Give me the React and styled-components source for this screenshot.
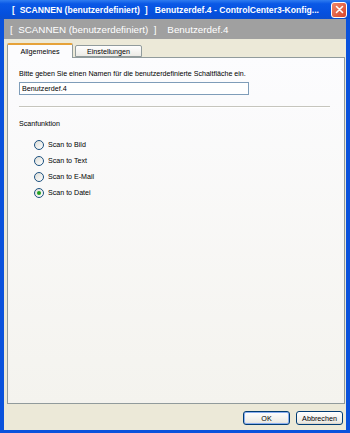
import React, { useState } from 'react';
import styled, { createGlobalStyle } from 'styled-components';

const GlobalStyle = createGlobalStyle`
  html, body {
    margin: 0;
    padding: 0;
    background: #0a50d8;
  }
  body {
    font-family: "Liberation Sans", Arial, sans-serif;
  }
`;

const Window = styled.div`
  width: 350px;
  height: 433px;
  display: flex;
  flex-direction: column;
  background: #0a52dc;
  box-sizing: border-box;
  padding: 0 4px 3px 4px;
  overflow: hidden;
`;

const TitleBar = styled.div`
  height: 19px;
  margin: 0 -4px;
  padding: 0 3px 0 12px;
  display: flex;
  align-items: center;
  justify-content: space-between;
  background: linear-gradient(#2f7cf0 0%, #0a58e6 20%, #0550de 70%, #0a4ed0 100%);
  color: #fff;
  font-family: "Liberation Sans", Arial, sans-serif;
  font-weight: bold;
  font-size: 8.6px;
  white-space: pre;
`;

const CloseButton = styled.div`
  width: 14px;
  height: 14px;
  border: 1px solid #fff;
  border-radius: 3px;
  background: linear-gradient(135deg, #f0866a, #d8452a);
  display: flex;
  align-items: center;
  justify-content: center;
`;

const Body = styled.div`
  flex: 1;
  display: flex;
  flex-direction: column;
  background: #ece9d8;
`;

const Header = styled.div`
  height: 20px;
  padding-left: 6px;
  display: flex;
  align-items: center;
  background: #a0a0a0;
  color: #fff;
  font-family: "Liberation Sans", Arial, sans-serif;
  font-size: 9.8px;
  white-space: pre;
`;

const TabRow = styled.div`
  display: flex;
  align-items: flex-end;
  padding: 3px 0 0 3px;
  height: 15px;
  position: relative;
  z-index: 1;
`;

const Tab = styled.div`
  box-sizing: border-box;
  height: ${(p) => (p.active ? '15px' : '12px')};
  width: ${(p) => p.width}px;
  margin-right: 2px;
  margin-bottom: ${(p) => (p.active ? '-1px' : '0')};
  border: 1px solid #919b9c;
  border-bottom: ${(p) => (p.active ? 'none' : '1px solid #919b9c')};
  border-top: ${(p) => (p.active ? '2px solid #e6a23a' : '1px solid #919b9c')};
  border-radius: 2px 2px 0 0;
  background: ${(p) => (p.active ? '#fcfcfe' : 'linear-gradient(#fefefe, #ecebe6)')};
  font-family: "Liberation Sans", Arial, sans-serif;
  font-size: 7.2px;
  color: #000;
  display: flex;
  justify-content: center;
  align-items: center;
`;

const Panel = styled.div`
  flex: 1;
  margin: 0 1px 0 3px;
  border: 1px solid #919b9c;
  background: linear-gradient(#fcfcfe, #f4f3ee);
  padding: 11px 0 0 11px;
  display: flex;
  flex-direction: column;
  font-family: "Liberation Sans", Arial, sans-serif;
  font-size: 7.1px;
  color: #000;
`;

const Label = styled.div`
  line-height: 10px;
  margin-bottom: ${(p) => p.gap || 0}px;
`;

const TextInput = styled.input`
  box-sizing: border-box;
  width: 230px;
  height: 13px;
  border: 1px solid #7f9db9;
  background: #fff;
  font-family: "Liberation Sans", Arial, sans-serif;
  font-size: 7.2px;
  padding: 0 2px;
  outline: none;
`;

const Separator = styled.div`
  height: 0;
  width: 311px;
  border-top: 1px solid #c6c5bd;
  border-bottom: 1px solid #fff;
  margin: 11px 0 11px;
`;

const RadioList = styled.div`
  display: flex;
  flex-direction: column;
  gap: 6px;
  padding: 11px 0 0 15px;
`;

const RadioRow = styled.label`
  display: flex;
  align-items: center;
  gap: 4px;
  height: 10px;
  cursor: default;
`;

const RadioCircle = styled.span`
  box-sizing: border-box;
  width: 10px;
  height: 10px;
  border-radius: 50%;
  border: 1px solid #1c5180;
  background: linear-gradient(135deg, #dcdcd6, #fff);
  display: flex;
  align-items: center;
  justify-content: center;
  &::after {
    content: '';
    width: 4px;
    height: 4px;
    border-radius: 50%;
    background: ${(p) => (p.checked ? '#21a121' : 'transparent')};
  }
`;

const Footer = styled.div`
  height: 26px;
  display: flex;
  justify-content: flex-end;
  align-items: flex-start;
  gap: 6px;
  padding: 7px 3px 0 0;
  box-sizing: border-box;
`;

const Button = styled.button`
  box-sizing: border-box;
  width: ${(p) => p.width}px;
  height: 14px;
  padding: 0;
  border: 1px solid #003c74;
  border-radius: 3px;
  background: linear-gradient(#fff, #ecebe6 85%, #d6d0c5);
  box-shadow: ${(p) => (p.default ? 'inset 0 0 0 1px #8aaef0' : 'none')};
  font-family: "Liberation Sans", Arial, sans-serif;
  font-size: 7.2px;
  color: #000;
`;

const options = ['Scan to Bild', 'Scan to Text', 'Scan to E-Mail', 'Scan to Datei'];

export default function App() {
  const [selected, setSelected] = useState(3);
  const [name, setName] = useState('Benutzerdef.4');

  return (
    <>
      <GlobalStyle />
      <Window>
        <TitleBar>
          <span>{'[  SCANNEN (benutzerdefiniert)  ]   Benutzerdef.4 - ControlCenter3-Konfig...'}</span>
          <CloseButton>
            <svg width="9" height="9" viewBox="0 0 9 9">
              <path d="M1.5 1.5 L7.5 7.5 M7.5 1.5 L1.5 7.5" stroke="#fff" strokeWidth="1.6" strokeLinecap="round" />
            </svg>
          </CloseButton>
        </TitleBar>
        <Body>
          <Header>{'[  SCANNEN (benutzerdefiniert)  ]    Benutzerdef.4'}</Header>
          <TabRow>
            <Tab active width={66}>Allgemeines</Tab>
            <Tab width={67}>Einstellungen</Tab>
          </TabRow>
          <Panel>
            <Label gap={3}>Bitte geben Sie einen Namen für die benutzerdefinierte Schaltfläche ein.</Label>
            <TextInput value={name} onChange={(e) => setName(e.target.value)} />
            <Separator />
            <Label>Scanfunktion</Label>
            <RadioList>
              {options.map((opt, i) => (
                <RadioRow key={opt} onClick={() => setSelected(i)}>
                  <RadioCircle checked={selected === i} />
                  {opt}
                </RadioRow>
              ))}
            </RadioList>
          </Panel>
          <Footer>
            <Button default width={47}>OK</Button>
            <Button width={47}>Abbrechen</Button>
          </Footer>
        </Body>
      </Window>
    </>
  );
}
